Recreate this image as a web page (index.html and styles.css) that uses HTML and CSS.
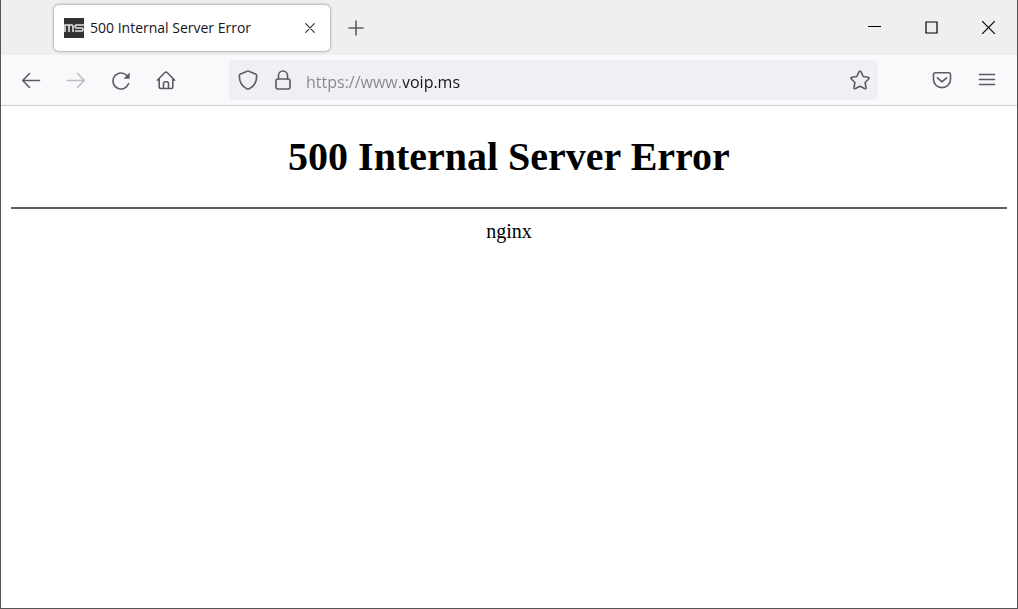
FILE: index.html
```html
<!DOCTYPE html>
<html lang="en">
<head>
  <meta charset="UTF-8">
  <meta name="viewport" content="width=device-width, initial-scale=1.0">
  <title>500 Internal Server Error</title>
  <link rel="stylesheet" href="styles.css">
</head>
<body>
  <div class="window">
    <header class="tabbar">
      <div class="tab">
        <svg class="favicon" width="20" height="20" viewBox="0 0 20 20">
          <rect width="20" height="20" fill="#333" stroke="none"/>
          <path d="M1 14V7H7.500Q9 7 9 8.500V14M5 7V14M20 7H12.500Q11 7 11 8.500T12.500 10H18Q19 10 19 11.500T18 13H11" fill="none" stroke="#e4e4e4"/>
        </svg>
        <span class="tab-title">500 Internal Server Error</span>
        <button class="tab-close" aria-label="Close tab">
          <svg width="10" height="10" viewBox="0 0 10 10"><path d="M.7.7l8.6 8.6M9.3.7L.7 9.3"/></svg>
        </button>
      </div>
      <button class="new-tab" aria-label="New tab">
        <svg width="16" height="16" viewBox="0 0 16 16"><path d="M8 1v14M1 8h14"/></svg>
      </button>
      <div class="controls">
        <button aria-label="Minimize">
          <svg width="13" height="13" viewBox="0 0 13 13"><path d="M.5 5.5h12"/></svg>
        </button>
        <button aria-label="Maximize">
          <svg width="13" height="13" viewBox="0 0 13 13"><path d="M1 1h11v11H1z"/></svg>
        </button>
        <button aria-label="Close">
          <svg width="13" height="13" viewBox="0 0 13 13"><path d="M.3.3l12.4 12.4M12.7.3L.3 12.7"/></svg>
        </button>
      </div>
    </header>

    <nav class="toolbar">
      <div class="group">
        <button aria-label="Back">
          <svg width="20" height="20" viewBox="0 0 20 20"><path d="M18.5 10.500H2M8.5 3.500l-6.800 7 6.800 7"/></svg>
        </button>
        <button aria-label="Forward" disabled>
          <svg width="20" height="20" viewBox="0 0 20 20"><path d="M1.5 10.500H18M11.5 3.500l6.800 7-6.800 7"/></svg>
        </button>
        <button aria-label="Reload">
          <svg width="20" height="20" viewBox="0 0 20 20"><path d="M17.6 13.500A8 8 0 1 1 16 5.700"/><path class="solid" d="M18.700 2.500v6.200h-6.200z"/></svg>
        </button>
        <button aria-label="Home">
          <svg width="20" height="20" viewBox="0 0 20 20"><path d="M1.3 10.2l7.6-7.7q1.1-1 2.2 0l7.6 7.7M3.2 8.5v8.3q0 1.7 1.7 1.7h10.2q1.7 0 1.7-1.7V8.5M7.5 18.5v-5q0-1.7 1.7-1.7h1.6q1.7 0 1.7 1.7v5"/></svg>
        </button>
      </div>

      <div class="urlbar">
        <button class="site" aria-label="Tracking protection">
          <svg width="20" height="20" viewBox="0 0 20 20"><path d="M10 1q-.7 0-1.4.4L2.5 3.9q-1.2.5-1.2 1.8c0 6.2 2.6 10.7 7.5 13q1.2.6 2.4 0c4.9-2.3 7.5-6.8 7.5-13q0-1.3-1.2-1.8l-6.1-2.5Q10.7 1 10 1z"/></svg>
        </button>
        <button class="site" aria-label="Connection secure">
          <svg width="20" height="20" viewBox="0 0 20 20"><path d="M5.5 9V5.5a4.5 4.5 0 0 1 9 0V9"/><rect x="3" y="9" width="14" height="10" rx="2"/></svg>
        </button>
        <input class="url" type="text" value="https://www.voip.ms" aria-label="Address" spellcheck="false">
        <button class="site" aria-label="Bookmark this page">
          <svg width="20" height="20" viewBox="0 0 20 20"><path d="M10 1.2q.8 0 1.2.9l2 4.4 4.8.7q1.8.4.6 1.8l-3.500 3.500.9 5q.1 1.6-1.500 1L10 16.2l-4.500 2.3q-1.600.6-1.500-1l.9-5L1.400 9Q.2 7.600 2 7.200l4.800-.7 2-4.400q.4-.9 1.200-.9z"/></svg>
        </button>
      </div>

      <div class="group">
        <button aria-label="Save to Pocket">
          <svg width="20" height="20" viewBox="0 0 20 20"><path d="M3.5 2.8h13q2 0 2 2v4.700a8.500 8.100 0 0 1-17 0V4.800q0-2 2-2zM5.5 7.800l4.500 4.100 4.500-4.100"/></svg>
        </button>
        <button aria-label="Open menu">
          <svg width="20" height="20" viewBox="0 0 20 20"><path d="M2.5 4.500h15M2.5 9.500h15M2.5 14.500h15"/></svg>
        </button>
      </div>
    </nav>

    <main class="page">
      <h1>500 Internal Server Error</h1>
      <hr>
      <p>nginx</p>
    </main>
  </div>
</body>
</html>
```

FILE: styles.css
```css
* {
  box-sizing: border-box;
}
body {
  margin: 0;
  font-family: "Open Sans", "Noto Sans", sans-serif;
}
.window {
  display: flex;
  flex-direction: column;
  min-height: 100vh;
  border: 1px solid #555;
  border-top: 0;
  background: #fff;
}
button {
  display: flex;
  align-items: center;
  justify-content: center;
  padding: 0;
  border: 0;
  background: none;
  color: #5b5b66;
}
svg {
  flex: none;
  fill: none;
  stroke: currentColor;
  stroke-width: 1.6;
  stroke-linecap: round;
  stroke-linejoin: round;
}
.solid {
  fill: currentColor;
  stroke: none;
}

/* tab strip */
.tabbar {
  display: flex;
  align-items: center;
  height: 55px;
  padding-left: 53px;
  background: #efefef;
}
.tab {
  display: flex;
  align-items: center;
  flex: 0 1 276px;
  height: 46px;
  padding: 0 10px;
  border-radius: 5px;
  background: #fff;
  box-shadow: 0 0 3px #777;
}
.favicon {
  stroke-linecap: butt;
  stroke-linejoin: miter;
}
.tab-title {
  flex: 1;
  margin-left: 6px;
  font-size: 14px;
  line-height: 20px;
  white-space: nowrap;
  color: #15141a;
}
.tab-close {
  width: 20px;
  height: 20px;
  color: #333;
}
.tab-close svg {
  stroke-width: 1.2;
}
.new-tab {
  width: 32px;
  height: 32px;
  margin-left: 10px;
}
.controls {
  display: flex;
  align-self: stretch;
  margin-left: auto;
}
.controls button {
  width: 57px;
  color: #000;
}
.controls svg {
  stroke-width: 1.2;
  stroke-linejoin: miter;
}

/* navigation toolbar */
.toolbar {
  display: flex;
  align-items: center;
  gap: 41px;
  height: 51px;
  padding: 0 8px 0 7px;
  border-bottom: 1px solid #ccc;
  background: #f9f9fb;
}
.group {
  display: flex;
}
.group button {
  width: 45px;
  height: 40px;
}
button:disabled {
  color: #bcbcc2;
}
.urlbar {
  display: flex;
  align-items: center;
  flex: 1;
  height: 40px;
  padding: 0 1px;
  border-radius: 5px;
  background: #f0f0f4;
}
.site {
  width: 35px;
  height: 36px;
}
/* the scheme and subdomain are dimmed, the domain is dark */
.url {
  flex: 1;
  min-width: 0;
  height: 36px;
  margin-left: 6px;
  padding: 3px 0 0;
  border: 0;
  outline: 0;
  font-family: inherit;
  font-size: 16px;
  background: linear-gradient(to right, #85858c 97px, #15141a 97px);
  -webkit-background-clip: text;
  background-clip: text;
  color: transparent;
}

/* error page */
.page {
  flex: 1;
  padding: 0 10px;
  font-family: "Liberation Serif", "Times New Roman", serif;
  font-size: 20px;
  text-align: center;
  color: #000;
}
.page h1 {
  margin: 28px 0 27px;
  font-size: 40px;
  line-height: 46px;
}
.page hr {
  height: 2px;
  margin: 0;
  border: 0;
  background: #5c5c5c;
}
.page p {
  margin: 10px 0;
  line-height: 24px;
}
```
